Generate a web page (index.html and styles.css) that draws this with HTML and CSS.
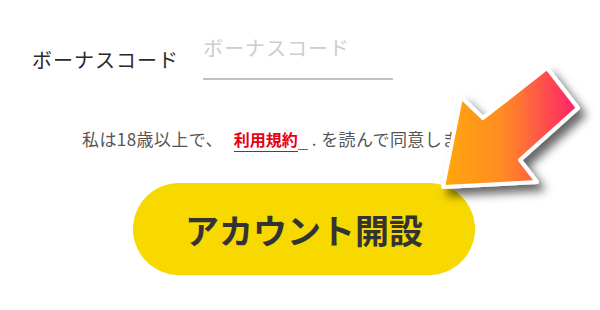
FILE: index.html
```html
<!DOCTYPE html>
<html lang="ja">
<head>
<meta charset="utf-8">
<link rel="stylesheet" href="styles.css">
</head>
<body>
<div class="page">
  <div class="row">
    <label class="label" for="bonus">ボーナスコード</label>
    <input class="field" id="bonus" type="text" placeholder="ボーナスコード">
  </div>
  <p class="terms">私は18歳以上で、<a class="link" href="#">利用規約</a><span class="tail"></span>. を読んで同意します</p>
  <button class="cta" type="button">アカウント開設</button>
  <svg class="arrow" width="600" height="310" viewBox="0 0 600 310">
    <defs>
      <linearGradient id="g" x1="443" y1="0" x2="578" y2="0" gradientUnits="userSpaceOnUse">
        <stop offset="0" stop-color="#ffa80c"/>
        <stop offset="0.45" stop-color="#ff8a24"/>
        <stop offset="1" stop-color="#ff1f6c"/>
      </linearGradient>
      <filter id="s" x="-20%" y="-20%" width="150%" height="150%">
        <feDropShadow dx="6" dy="7" stdDeviation="5" flood-color="#000" flood-opacity="0.6"/>
      </filter>
    </defs>
    <polygon filter="url(#s)" points="443,187 461,97 483,118 547,68 578,108 520,160 537,182" fill="url(#g)" stroke="#fff" stroke-width="4" stroke-linejoin="round"/>
  </svg>
</div>
</body>
</html>
```
FILE: styles.css
```css
html, body {
  margin: 0;
  padding: 0;
  background: #fff;
}
.page {
  position: relative;
  width: 600px;
  height: 310px;
  overflow: hidden;
  font-family: "Noto Sans CJK JP", "Noto Sans", sans-serif;
  color: #333;
}
.row {
  display: flex;
  align-items: flex-start;
  padding: 34px 0 0 32px;
}
.label {
  font-size: 20px;
  line-height: 28px;
  letter-spacing: 1px;
  margin-top: 12px;
  color: #2a2a2a;
}
.field {
  margin-left: 24px;
  width: 190px;
  height: 46px;
  box-sizing: border-box;
  padding: 0 0 18px 0;
  border: none;
  border-bottom: 2px solid #c2c2c2;
  font-family: inherit;
  font-size: 20px;
  line-height: 28px;
  letter-spacing: 1px;
  background: transparent;
  outline: none;
}
.field::placeholder {
  color: #cdcdcd;
}
.terms {
  margin: 47px 0 0 82px;
  font-size: 17px;
  line-height: 24px;
  letter-spacing: 0.4px;
  color: #555;
  white-space: nowrap;
}
.link {
  margin-left: 11px;
  color: #e60012;
  font-weight: bold;
  font-size: 16px;
  letter-spacing: 0;
  text-decoration: none;
  border-bottom: 1px solid #e60012;
}
.tail {
  display: inline-block;
  width: 10px;
  height: 19px;
  border-bottom: 1px solid #666;
  vertical-align: top;
  margin-top: 3px;
  margin-right: 4px;
}
.cta {
  display: block;
  margin: 32px 0 0 133px;
  width: 342px;
  height: 92px;
  border: none;
  border-radius: 46px;
  background: #f7d900;
  font-family: inherit;
  font-size: 34px;
  font-weight: bold;
  color: #333;
  padding: 0;
}
.arrow {
  position: absolute;
  left: 0;
  top: 0;
}
```
